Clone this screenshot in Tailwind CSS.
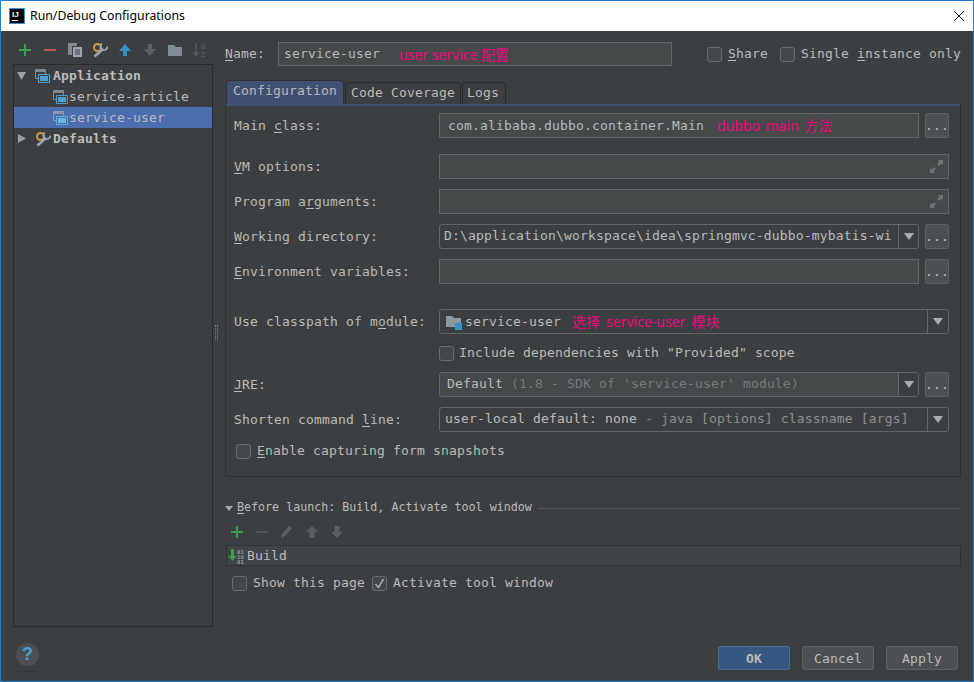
<!DOCTYPE html>
<html lang="en">
<head>
<meta charset="UTF-8" />
<title>Run/Debug Configurations</title>
<script src="https://cdn.jsdelivr.net/npm/@tailwindcss/browser@4"></script>
</head>
<body class="bg-[#3c3f41]">
<div class="w-[974px] h-[682px] border border-[#1683d8] bg-[#3c3f41] flex flex-col overflow-hidden text-[#bbbbbb] text-[13px] tracking-[0.17px] font-['DejaVu_Sans_Mono',monospace]">

  <!-- title bar -->
  <div class="h-[30px] shrink-0 bg-white flex items-center tracking-normal">
    <div class="ml-[8px] w-[16px] h-[16px] bg-black border border-[#3b8fd9] flex flex-col px-[2px] pt-[1px]">
      <span class="text-white text-[8px] leading-[9px] font-bold font-['Liberation_Sans',sans-serif]">IJ</span>
      <span class="mt-[1px] w-[6px] h-[1px] bg-white"></span>
    </div>
    <span class="ml-[5px] text-[12.3px] text-black font-['Noto_Sans',sans-serif]">Run/Debug Configurations</span>
    <svg class="ml-auto mr-[8px]" width="12" height="12" viewBox="0 0 12 12"><path d="M1 1l10 10M11 1L1 11" stroke="#111" stroke-width="1" fill="none"/></svg>
  </div>

  <!-- main -->
  <div class="h-[596px] shrink-0 flex">

    <!-- left column -->
    <div class="ml-[12px] w-[200px] shrink-0 flex flex-col">
      <div class="h-[33px] shrink-0 flex items-end pb-[6px] -ml-[1px]">
        <span class="w-[25px] flex justify-center"><svg width="16" height="16" viewBox="0 0 16 16"><path d="M8 2v12M2 8h12" stroke="#3f9c4f" stroke-width="2"/></svg></span>
        <span class="w-[25px] flex justify-center"><svg width="16" height="16" viewBox="0 0 16 16"><path d="M2 8h12" stroke="#c75450" stroke-width="2"/></svg></span>
        <span class="w-[25px] flex justify-center"><svg width="16" height="16" viewBox="0 0 16 16"><path d="M1 1h9v3H5v9H1z" fill="#7f8b91"/><path d="M6 5h9v10H6z" fill="#9aa7b0"/><path d="M8 8h5M8 10h5M8 12h5" stroke="#3c3f41"/></svg></span>
        <span class="w-[25px] flex justify-center"><svg width="16" height="16" viewBox="0 0 16 16"><circle cx="5.500" cy="5.500" r="3.500" fill="none" stroke="#d39a3c" stroke-width="2"/><path d="M2.500 14.500L11 7" stroke="#9aa7b0" stroke-width="2.500" fill="none"/><path d="M10 1.500a3.500 3.500 0 0 0-.5 5.500 3.500 3.500 0 0 0 6-2.500" stroke="#9aa7b0" stroke-width="1.800" fill="none"/></svg></span>
        <span class="w-[25px] flex justify-center"><svg width="16" height="16" viewBox="0 0 16 16"><path d="M8 2l6 7h-4v5H6V9H2z" fill="#3592c4"/></svg></span>
        <span class="w-[25px] flex justify-center"><svg width="16" height="16" viewBox="0 0 16 16"><path d="M8 14L2 7h4V2h4v5h4z" fill="#5d6062"/></svg></span>
        <span class="w-[25px] flex justify-center"><svg width="16" height="16" viewBox="0 0 16 16"><path d="M1 3h6l2 2h6v9H1z" fill="#7f8b91"/></svg></span>
        <span class="w-[25px] flex justify-center"><svg width="16" height="16" viewBox="0 0 16 16"><path d="M4 1v12M1.500 10L4 14l2.500-4" stroke="#5d6062" fill="none" stroke-width="1.300"/><text x="8.500" y="7" font-size="8" fill="#5d6062" font-family="DejaVu Sans Mono">a</text><text x="8.500" y="15" font-size="8" fill="#5d6062" font-family="DejaVu Sans Mono">z</text></svg></span>
      </div>
      <div class="h-[563px] border border-[#2b2b2b] flex flex-col">
        <div class="h-[21px] flex items-center">
          <svg class="ml-[3px]" width="9" height="8" viewBox="0 0 9 8"><path d="M0 0h9L4.500 8z" fill="#9a9fa3"/></svg>
          <svg class="ml-[9px]" width="15" height="15" viewBox="0 0 15 15"><path d="M.5 1.500h10v9H.5z" fill="none" stroke="#7f8b91"/><path d="M1 2h9v2H1z" fill="#7f8b91"/><path d="M3.500 6.500h11v8h-11z" fill="#3c3f41" stroke="#4a9fd4"/><path d="M5 8h8v5H5z" fill="#4a9fd4"/></svg>
          <span class="ml-[3px] font-bold">Application</span>
        </div>
        <div class="h-[21px] flex items-center pl-[39px]">
          <svg width="15" height="15" viewBox="0 0 15 15"><path d="M.5 1.500h10v9H.5z" fill="none" stroke="#7f8b91"/><path d="M1 2h9v2H1z" fill="#7f8b91"/><path d="M3.500 6.500h11v8h-11z" fill="#3c3f41" stroke="#4a9fd4"/><path d="M5 8h8v5H5z" fill="#4a9fd4"/></svg>
          <span class="ml-[1px]">service-article</span>
        </div>
        <div class="h-[21px] flex items-center pl-[39px] bg-[#4b6eaf]">
          <svg width="15" height="15" viewBox="0 0 15 15"><path d="M.5 1.500h10v9H.5z" fill="none" stroke="#8b97a8"/><path d="M1 2h9v2H1z" fill="#8b97a8"/><path d="M3.500 6.500h11v8h-11z" fill="#4b6eaf" stroke="#5fb0dc"/><path d="M5 8h8v5H5z" fill="#6fb6de"/></svg>
          <span class="ml-[1px]">service-user</span>
        </div>
        <div class="h-[21px] flex items-center">
          <svg class="ml-[4px]" width="8" height="9" viewBox="0 0 8 9"><path d="M0 0v9l8-4.500z" fill="#9a9fa3"/></svg>
          <svg class="ml-[9px]" width="16" height="16" viewBox="0 0 16 16"><circle cx="5.500" cy="5.500" r="3.500" fill="none" stroke="#d39a3c" stroke-width="2"/><path d="M2.500 14.500L11 7" stroke="#9aa7b0" stroke-width="2.500" fill="none"/><path d="M10 1.500a3.500 3.500 0 0 0-.5 5.500 3.500 3.500 0 0 0 6-2.500" stroke="#9aa7b0" stroke-width="1.800" fill="none"/></svg>
          <span class="ml-[2px] font-bold">Defaults</span>
        </div>
      </div>
    </div>

    <!-- splitter -->
    <div class="w-[12px] shrink-0 flex flex-col pl-[2px] pt-[294px] gap-[1px]">
      <span class="w-[3px] h-[16px] border-x border-dotted border-[#7a7d7f]"></span>
    </div>

    <!-- right column -->
    <div class="w-[736px] shrink-0 flex flex-col">
      <div class="mt-[11px] h-[24px] flex items-center shrink-0">
        <span class="w-[53px]"><u class="underline-offset-2">N</u>ame:</span>
        <div class="w-[394px] h-[24px] border border-[#646464] bg-[#45494a] flex items-center pl-[5px]">
          service-user
          <span class="ml-[19px] text-[14px] tracking-normal text-[#f0057f] font-['Noto_Sans','Noto_Sans_CJK_SC',sans-serif]">user service 配置</span>
        </div>
        <span class="ml-[35px] w-[15px] h-[15px] border border-[#6b6b6b] bg-[#43474a] rounded-[3px]"></span>
        <span class="ml-[6px]"><u class="underline-offset-2">S</u>hare</span>
        <span class="ml-[12px] w-[15px] h-[15px] border border-[#6b6b6b] bg-[#43474a] rounded-[3px]"></span>
        <span class="ml-[6px]">Single <u class="underline-offset-2">i</u>nstance only</span>
      </div>

      <!-- tabs -->
      <div class="mt-[14px] h-[24px] pl-[1px] flex items-end shrink-0">
        <div class="w-[118px] h-[24px] bg-[#3f5072] rounded-t-[4px] border border-b-0 border-[#2f3133] pl-[6px]">Configuration</div>
        <div class="ml-[1px] w-[116px] h-[22px] rounded-t-[4px] border border-b-0 border-[#2b2b2b] pl-[5px]">Code Coverage</div>
        <div class="ml-[1px] w-[44px] h-[22px] rounded-t-[4px] border border-b-0 border-[#2b2b2b] pl-[4px]">Logs</div>
      </div>
      <div class="h-[373px] shrink-0 border border-t-0 border-[#2f3133] flex flex-col">
        <div class="h-[2px] bg-[#3f5072] shrink-0"></div>

        <div class="mt-[7px] h-[25px] flex items-center pl-[8px]">
          <span class="w-[205px]">Main <u class="underline-offset-2">c</u>lass:</span>
          <div class="w-[480px] h-[25px] border border-[#646464] bg-[#45494a] flex items-center pl-[8px]">
            com.alibaba.dubbo.container.Main
            <span class="ml-[13px] text-[14px] tracking-normal [word-spacing:2px] text-[#f0057f] font-['Noto_Sans','Noto_Sans_CJK_SC',sans-serif]">dubbo main 方法</span>
          </div>
          <div class="ml-[6px] w-[24px] h-[25px] border border-[#5e6060] bg-[#4c5052] rounded-[2px] flex items-center justify-center">...</div>
        </div>

        <div class="mt-[16px] h-[25px] flex items-center pl-[8px]">
          <span class="w-[205px]"><u class="underline-offset-2">V</u>M options:</span>
          <div class="w-[510px] h-[25px] border border-[#646464] bg-[#45494a] flex items-center justify-end pr-[5px]">
            <svg width="13" height="13" viewBox="0 0 13 13"><path d="M8 0h5v5L11.500 3.500 9 6 7 4l2.500-2.500zM5 13H0V8l1.500 1.500L4 7l2 2-2.500 2.500z" fill="#6e7375"/></svg>
          </div>
        </div>

        <div class="mt-[10px] h-[25px] flex items-center pl-[8px]">
          <span class="w-[205px]">Program a<u class="underline-offset-2">r</u>guments:</span>
          <div class="w-[510px] h-[25px] border border-[#646464] bg-[#45494a] flex items-center justify-end pr-[5px]">
            <svg width="13" height="13" viewBox="0 0 13 13"><path d="M8 0h5v5L11.500 3.500 9 6 7 4l2.500-2.500zM5 13H0V8l1.500 1.500L4 7l2 2-2.500 2.500z" fill="#6e7375"/></svg>
          </div>
        </div>

        <div class="mt-[10px] h-[25px] flex items-center pl-[8px]">
          <span class="w-[205px]"><u class="underline-offset-2">W</u>orking directory:</span>
          <div class="w-[480px] h-[25px] border border-[#646464] rounded-[3px] flex items-center pl-[4px]">
            <span class="flex-1 whitespace-nowrap pb-[2px]">D:\application\workspace\idea\springmvc-dubbo-mybatis-wi</span>
            <span class="w-[20px] h-full shrink-0 border-l border-[#646464] flex items-center justify-center"><svg width="10" height="7" viewBox="0 0 10 7"><path d="M0 0h10L5 7z" fill="#a9abad"/></svg></span>
          </div>
          <div class="ml-[6px] w-[24px] h-[25px] border border-[#5e6060] bg-[#4c5052] rounded-[2px] flex items-center justify-center">...</div>
        </div>

        <div class="mt-[10px] h-[25px] flex items-center pl-[8px]">
          <span class="w-[205px]"><u class="underline-offset-2">E</u>nvironment variables:</span>
          <div class="w-[480px] h-[25px] border border-[#646464] bg-[#45494a]"></div>
          <div class="ml-[6px] w-[24px] h-[25px] border border-[#5e6060] bg-[#4c5052] rounded-[2px] flex items-center justify-center">...</div>
        </div>

        <div class="mt-[25px] h-[25px] flex items-center pl-[8px]">
          <span class="w-[205px]">Use classpath of m<u class="underline-offset-2">o</u>dule:</span>
          <div class="w-[510px] h-[25px] border border-[#646464] rounded-[3px] flex items-center pl-[6px]">
            <svg width="16" height="16" viewBox="0 0 16 16"><path d="M0 2h6l2 2h7v9H0z" fill="#8a979f"/><path d="M9 9h7v7H9z" fill="#3592c4"/></svg>
            <span class="ml-[3px]">service-user</span>
            <span class="ml-[11px] flex-1 text-[14px] tracking-normal [word-spacing:2.500px] text-[#f0057f] font-['Noto_Sans','Noto_Sans_CJK_SC',sans-serif]">选择 service-user 模块</span>
            <span class="w-[21px] h-full shrink-0 border-l border-[#646464] flex items-center justify-center"><svg width="10" height="7" viewBox="0 0 10 7"><path d="M0 0h10L5 7z" fill="#a9abad"/></svg></span>
          </div>
        </div>

        <div class="mt-[11px] h-[16px] flex items-center pl-[213px]">
          <span class="w-[15px] h-[15px] border border-[#6b6b6b] bg-[#43474a] rounded-[3px]"></span>
          <span class="ml-[5px]">Include dependencies with "Provided" scope</span>
        </div>

        <div class="mt-[11px] h-[25px] flex items-center pl-[8px]">
          <span class="w-[205px]"><u class="underline-offset-2">J</u>RE:</span>
          <div class="w-[480px] h-[25px] border border-[#646464] bg-[#45494a] rounded-[3px] flex items-center pl-[7px]">
            <span class="flex-1 whitespace-nowrap pb-[2px]">Default <span class="text-[#777a7c]">(1.8 - SDK of 'service-user' module)</span></span>
            <span class="w-[20px] h-full shrink-0 border-l border-[#646464] bg-[#3c3f41] flex items-center justify-center"><svg width="10" height="7" viewBox="0 0 10 7"><path d="M0 0h10L5 7z" fill="#a9abad"/></svg></span>
          </div>
          <div class="ml-[6px] w-[24px] h-[25px] border border-[#5e6060] bg-[#4c5052] rounded-[2px] flex items-center justify-center">...</div>
        </div>

        <div class="mt-[10px] h-[25px] flex items-center pl-[8px]">
          <span class="w-[205px]">Shorten command <u class="underline-offset-2">l</u>ine:</span>
          <div class="w-[510px] h-[25px] border border-[#646464] rounded-[3px] flex items-center pl-[5px]">
            <span class="flex-1 whitespace-nowrap pb-[2px]">user-local default: none <span class="text-[#8c8f91]">- java [options] classname [args]</span></span>
            <span class="w-[21px] h-full shrink-0 border-l border-[#646464] flex items-center justify-center"><svg width="10" height="7" viewBox="0 0 10 7"><path d="M0 0h10L5 7z" fill="#a9abad"/></svg></span>
          </div>
        </div>

        <div class="mt-[11px] h-[16px] flex items-center pl-[10px]">
          <span class="w-[15px] h-[15px] border border-[#6b6b6b] bg-[#43474a] rounded-[3px]"></span>
          <span class="ml-[6px]"><u class="underline-offset-2">E</u>nable capturing form snapshots</span>
        </div>
      </div>

      <!-- before launch -->
      <div class="mt-[21px] h-[20px] flex items-center shrink-0">
        <svg width="8" height="5" viewBox="0 0 8 5"><path d="M0 0h8L4 5z" fill="#a9abad"/></svg>
        <span class="ml-[4px] text-[11.660px] tracking-normal"><u class="underline-offset-2">B</u>efore launch: Build, Activate tool window</span>
        <span class="ml-[6px] flex-1 h-px bg-[#55585a]"></span>
      </div>
      <div class="mt-[5px] h-[18px] flex items-center shrink-0 -ml-[1px]">
        <span class="w-[25px] flex justify-center"><svg width="14" height="14" viewBox="0 0 14 14"><path d="M7 1v12M1 7h12" stroke="#3f9c4f" stroke-width="2"/></svg></span>
        <span class="w-[25px] flex justify-center"><svg width="14" height="14" viewBox="0 0 14 14"><path d="M1 7h12" stroke="#55585a" stroke-width="2"/></svg></span>
        <span class="w-[25px] flex justify-center"><svg width="14" height="14" viewBox="0 0 14 14"><path d="M1 13l1-4 7-8 3 2-7 8z" fill="#5d6062"/></svg></span>
        <span class="w-[25px] flex justify-center"><svg width="14" height="14" viewBox="0 0 14 14"><path d="M7 1l6 6H9.500v6h-5V7H1z" fill="#5d6062"/></svg></span>
        <span class="w-[25px] flex justify-center"><svg width="14" height="14" viewBox="0 0 14 14"><path d="M7 13L1 7h3.500V1h5v6H13z" fill="#5d6062"/></svg></span>
      </div>
      <div class="mt-[4px] ml-[1px] h-[21px] shrink-0 border border-[#2f3133] bg-[#404446] flex items-center pl-[1px]">
        <svg width="16" height="16" viewBox="0 0 16 16"><path d="M3 1h3v7h2.500l-4 5-4-5H3z" fill="#3f9c4f"/><text x="9" y="5.500" font-size="5.500" fill="#bbbbbb" font-family="DejaVu Sans Mono">01</text><text x="9" y="10.500" font-size="5.500" fill="#bbbbbb" font-family="DejaVu Sans Mono">10</text><text x="9" y="15.500" font-size="5.500" fill="#bbbbbb" font-family="DejaVu Sans Mono">01</text></svg>
        <span class="ml-[3px]">Build</span>
      </div>
      <div class="mt-[7px] h-[20px] pl-[7px] flex items-center shrink-0">
        <span class="w-[15px] h-[15px] border border-[#6b6b6b] bg-[#43474a] rounded-[3px]"></span>
        <span class="ml-[6px]">Show this page</span>
        <span class="ml-[7px] w-[15px] h-[15px] border border-[#6b6b6b] bg-[#43474a] rounded-[3px] flex items-center justify-center"><svg width="11" height="11" viewBox="0 0 11 11"><path d="M1.500 6l3 3.500L9.500 1" stroke="#a9abad" stroke-width="1.600" fill="none"/></svg></span>
        <span class="ml-[6px]">Activate tool window</span>
      </div>
    </div>
  </div>

  <!-- footer -->
  <div class="flex-1 flex items-start">
    <div class="ml-[15px] mt-[16px] w-[23px] flex flex-col">
      <div class="w-[23px] h-[23px] rounded-full bg-[#4c5052] flex items-center justify-center text-[#4a9fd4] text-[18px] font-bold font-['Liberation_Sans',sans-serif]">?</div>
      <span class="mt-[5px] h-px bg-[#33363a]"></span>
    </div>
    <div class="ml-auto mr-[15px] mt-[19px] flex gap-[12px]">
      <div class="w-[72px] h-[24px] pt-[1px] bg-[#365880] border border-[#4c708c] rounded-[2px] flex items-center justify-center font-bold">OK</div>
      <div class="w-[72px] h-[24px] pt-[1px] bg-[#4c5052] border border-[#5e6060] rounded-[2px] flex items-center justify-center">Cancel</div>
      <div class="w-[72px] h-[24px] pt-[1px] bg-[#4c5052] border border-[#5e6060] rounded-[2px] flex items-center justify-center">Apply</div>
    </div>
  </div>
</div>
</body>
</html>
